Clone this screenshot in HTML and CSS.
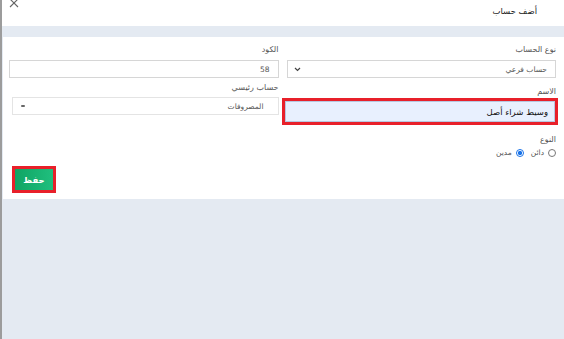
FILE: index.html
```html
<!DOCTYPE html>
<html lang="ar" dir="rtl">
<head>
<meta charset="utf-8">
<link rel="stylesheet" href="styles.css">
</head>
<body>
<div class="frame">
	<div class="header">
		<span class="title">أضف حساب</span>
		<svg class="close" width="10" height="10" viewBox="0 0 10 10"><path d="M1 1L9 9M9 1L1 9" stroke="#666" stroke-width="1.1"/></svg>
	</div>
	<div class="card">
		<div class="row">
			<div class="field">
				<label>نوع الحساب</label>
				<div class="select">
					<span>حساب فرعي</span>
					<svg width="7" height="5" viewBox="0 0 7 5"><path d="M1 1L3.5 3.5L6 1" stroke="#444" stroke-width="1.2" fill="none"/></svg>
				</div>
			</div>
			<div class="field">
				<label>الكود</label>
				<div class="input">58</div>
			</div>
		</div>
		<div class="row row2">
			<div class="field">
				<label>الاسم</label>
				<div class="mark">
					<div class="input filled">وسيط شراء أصل</div>
				</div>
			</div>
			<div class="field">
				<label class="lbl2">حساب رئيسي</label>
				<div class="select select2">
					<span>المصروفات</span>
					<i class="caret"></i>
				</div>
			</div>
		</div>
		<div class="kind">
			<label>النوع</label>
			<div class="radios">
				<span class="radio"><i class="dot"></i>دائن</span>
				<span class="radio"><i class="dot on"></i>مدين</span>
			</div>
		</div>
		<div class="actions">
			<div class="mark btnmark"><button class="save">حفظ</button></div>
		</div>
	</div>
</div>
</body>
</html>
```

FILE: styles.css
```css
body {
	margin: 0;
	font-family: "DejaVu Sans", sans-serif;
	background: #e4eaf2;
}

.frame {
	height: 339px;
	border-left: 2px solid #9c9c9c;
	box-sizing: border-box;
}

.header {
	height: 26px;
	background: #fff;
	display: flex;
	justify-content: space-between;
	align-items: flex-start;
	padding: 0 27px 0 0;
	box-sizing: border-box;
}

.title {
	font-size: 8.5px;
	color: #222;
	margin-top: 6px;
}

.close {
	margin-left: 7px;
	margin-top: -2px;
}

.card {
	background: #fff;
	margin: 11px 0 0 1px;
	padding: 8px 8px 7px 6px;
	height: 162px;
	box-sizing: border-box;
}

.row {
	display: grid;
	grid-template-columns: 1fr 1fr;
	column-gap: 8px;
}

.field label {
	display: block;
	font-size: 8px;
	color: #555;
	margin-bottom: 6px;
}

.select, .input {
	height: 18px;
	border: 1px solid #d6d6d6;
	box-sizing: border-box;
	display: flex;
	align-items: center;
	justify-content: space-between;
	padding: 0 8px 0 6px;
	font-size: 7.5px;
	color: #555;
}

.row2 {
	margin-top: 9px;
}

.row2 .field label {
	margin-bottom: 2px;
}

.lbl2 {
	margin-top: -4px;
}

.mark {
	border: 3px solid #e8202a;
	margin: 0 -2px 0 -5px;
}

.input.filled {
	background: #e8f0fe;
	border: 1px solid #b8c7e0;
	height: 21px;
	font-size: 8.5px;
	color: #111;
	padding-right: 6px;
}

.select2 {
	margin: 5px 0 0 3px;
	border-color: #e4e4e4;
	padding: 0 14px 0 8px;
}

.caret {
	width: 4px;
	height: 2px;
	background: #666;
	border-radius: 1px;
}

.kind {
	margin-top: 10px;
}

.kind label {
	display: block;
	font-size: 8px;
	color: #555;
}

.radios {
	display: flex;
	gap: 7px;
	margin-top: 4px;
	font-size: 7.5px;
	color: #555;
}

.radio {
	display: flex;
	align-items: center;
	gap: 4px;
}

.dot {
	width: 6px;
	height: 6px;
	border: 1px solid #777;
	border-radius: 50%;
}

.dot.on {
	border-color: #1a73e8;
	background: radial-gradient(circle, #1a73e8 45%, #fff 55%);
}

.actions {
	display: flex;
	justify-content: flex-end;
	margin-top: 9px;
}

.btnmark {
	margin: 0 0 0 3px;
}

.save {
	display: block;
	width: 38px;
	height: 21px;
	border: none;
	background: linear-gradient(90deg, #0fa463, #20bf7e);
	color: #fff;
	font-family: "DejaVu Sans", sans-serif;
	font-weight: bold;
	font-size: 8.5px;
	padding: 0;
}
```
